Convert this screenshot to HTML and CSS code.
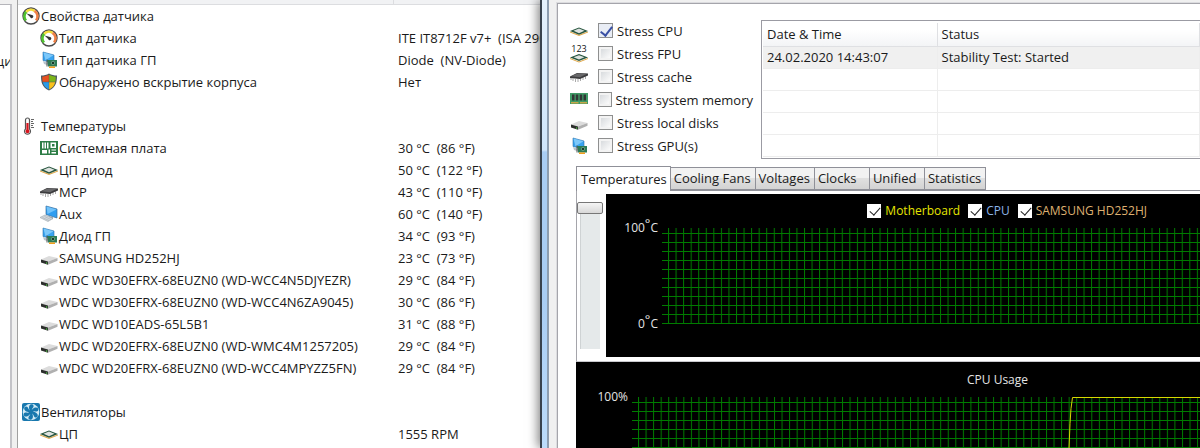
FILE: index.html
```
<!DOCTYPE html>
<html lang="ru">
<head>
    <meta charset="UTF-8">
    <meta name="viewport" content="width=device-width, initial-scale=1.0">
    <title>Датчики</title>
    <link rel="stylesheet" href="styles.css">
</head>
<body>
    <!-- icon set -->
    <svg class="sprite" width="0" height="0" aria-hidden="true">
        <defs>
            <symbol id="i-gauge" viewBox="0 0 18 18">
                <circle cx="9" cy="9" r="8" fill="#fff" stroke="#4a4a4a" stroke-width="1.4"/>
                <path d="M4 13.500A6.300 6.300 0 0 1 4.300 4.800" fill="none" stroke="#4fc22e" stroke-width="2.600"/>
                <path d="M4.300 4.800A6.300 6.300 0 0 1 12.500 3.800" fill="none" stroke="#f3dc3c" stroke-width="2.600"/>
                <path d="M12.500 3.800A6.300 6.300 0 0 1 14 13.300" fill="none" stroke="#f08046" stroke-width="2.600"/>
                <path d="M4.500 6.500l5.500 1.500a1.600 1.600 0 1 1-1.800 2z" fill="#333"/>
            </symbol>
            <symbol id="i-gpu" viewBox="0 0 18 18">
                <path d="M3 1l11 3v8L3 9.500z" fill="#38a3f0" stroke="#2b6ea8" stroke-width=".6"/>
                <path d="M3.500 1.500l10 2.800-8 5z" fill="#7cc8fa"/>
                <path d="M3 10l5 2-1 2-3-1z" fill="#b9c4cc"/>
                <path d="M7 9h10v6.500H8z" fill="#2c7a55"/>
                <path d="M7 8.500v7" stroke="#555" stroke-width="1"/>
                <circle cx="13" cy="12" r="1.700" fill="#163b2a" stroke="#8fc4a8" stroke-width=".6"/>
                <path d="M9 16.200h6" stroke="#f0a020" stroke-width="1.600"/>
            </symbol>
            <symbol id="i-shield" viewBox="0 0 18 18">
                <path d="M9 .5C6.500 2 4 2.600 1 2.600c0 7 1 11.500 8 15 7-3.500 8-8 8-15-3 0-5.500-.6-8-2.100z" fill="#4c5860"/>
                <path d="M8.800 1.800C6.800 3 4.500 3.600 2.200 3.700c0 2 .1 3.600.5 5.100h6.100z" fill="#e8501e"/>
                <path d="M9.200 1.800c2 1.200 4.300 1.800 6.600 1.900 0 2-.1 3.600-.5 5.100H9.200z" fill="#7cb518"/>
                <path d="M2.800 9.200c.8 3.300 2.600 5.400 6 7.200V9.200z" fill="#2a9be8"/>
                <path d="M15.200 9.200c-.8 3.300-2.600 5.400-6 7.200V9.200z" fill="#fbc21b"/>
            </symbol>
            <symbol id="i-temp" viewBox="0 0 18 18">
                <path d="M3.500 12V3a2 2 0 0 1 4 0v9a3 3 0 1 1-4 0z" fill="#fff" stroke="#555" stroke-width="1.200"/>
                <path d="M4.400 12.500V6h2.200v6.500a2 2 0 1 1-2.200 0z" fill="#d8141c"/>
                <path d="M9 2.500h3M9 4.500h2M9 6.500h3M9 8.500h2M9 10.500h3" stroke="#666" stroke-width="1"/>
            </symbol>
            <symbol id="i-board" viewBox="0 0 18 18">
                <path d="M0 2h18v14H0z" fill="#2d7d46"/>
                <path d="M2 3.500h1.500v6H2zM4.500 3.500H6v6H4.500zM7 3.500h1.500v6H7zM10.500 3.500H16V9h-5.500zM2 11h5v3.500H2zM8.500 10.500H10v4H8.500zM11.500 10.500H16v1h-4.500zM11.500 13H16v1.500h-4.500z" fill="#fff"/>
                <path d="M12 5h2.500v2.500H12z" fill="#2d7d46"/>
            </symbol>
            <symbol id="i-cpu" viewBox="0 0 18 18">
                <path d="M0 9.500l9 3.300 9-3.300v1l-9 3.400-9-3.400z" fill="#e0a84a"/>
                <path d="M0 9l9-3.600L18 9l-9 3.800z" fill="#27553e"/>
                <path d="M3.500 8.800L9 6.600l5.500 2.200L9 11.200z" fill="#dde2df"/>
            </symbol>
            <symbol id="i-fpu" viewBox="0 0 18 18">
                <text x="9" y="7" class="digits">123</text>
                <path d="M0 13l9 3.500 9-3.500v1l-9 3.500L0 14z" fill="#e0a84a"/>
                <path d="M0 12.500L9 9l9 3.500L9 16z" fill="#27553e"/>
                <path d="M3.500 12.300L9 10.200l5.500 2.100L9 14.400z" fill="#dde2df"/>
            </symbol>
            <symbol id="i-chip" viewBox="0 0 18 18">
                <path d="M1 9.500v2.500M3 10.500v2.500M5.500 11v3M8 11v3M10.500 10v3M13 9v3M15.500 8v3" stroke="#aaa" stroke-width="1"/>
                <path d="M0 8.500L7 5l11 .5v2L10 11 0 10z" fill="#3c3c3e"/>
                <path d="M1 8.300L7.500 5.500l9.500.3-7 3.500z" fill="#68686a"/>
            </symbol>
            <symbol id="i-pc" viewBox="0 0 18 18">
                <path d="M6 1l11 3v9L6 9.500z" fill="#2f9df0" stroke="#3a6f9c" stroke-width=".7"/>
                <path d="M6.500 1.600l10 2.800-9 4.600z" fill="#72c3fa"/>
                <path d="M9 11l4 1.200v2L9 13z" fill="#96a2ac"/>
                <path d="M0 12.500l5-2.500 8 3.500-5 3z" fill="#d5dade" stroke="#98a2aa" stroke-width=".6"/>
                <path d="M2.500 12.500l6.500 3M4.500 11.500l6.500 3" stroke="#98a2aa" stroke-width=".5"/>
            </symbol>
            <symbol id="i-disk" viewBox="0 0 18 18">
                <path d="M1 10.500L9 7l8.500 2L8 12.500z" fill="#dcdcdc"/>
                <path d="M8 12.500L17.500 9v2.800L8 15.800z" fill="#b0b0b0"/>
                <path d="M1 10.500l7 2v3.300l-7-2.300z" fill="#2c2e2c"/>
                <path d="M6 13.900l1.200.4" stroke="#52d048" stroke-width="1.200"/>
            </symbol>
            <symbol id="i-fan" viewBox="0 0 18 18">
                <rect width="18" height="18" rx="2" fill="#1878ae"/>
                <circle cx="9" cy="9" r="8.300" fill="#d3ebf6"/>
                <g fill="#1878ae">
                    <path id="blade" d="M9 9C6.500 7 6.300 2 9 1.200c3-.4 3.300 2.600 1.300 4.200z"/>
                    <use href="#blade" transform="rotate(60 9 9)"/>
                    <use href="#blade" transform="rotate(120 9 9)"/>
                    <use href="#blade" transform="rotate(180 9 9)"/>
                    <use href="#blade" transform="rotate(240 9 9)"/>
                    <use href="#blade" transform="rotate(300 9 9)"/>
                </g>
                <circle cx="9" cy="9" r="2.200" fill="#1878ae"/>
            </symbol>
            <symbol id="i-ram" viewBox="0 0 18 18">
                <path d="M0 2h18v11H0z" fill="#3f9a66"/>
                <path d="M2 3.500h2.500v6H2zM5.800 3.500h2.500v6H5.800zM9.700 3.500h2.500v6H9.700zM13.500 3.500H16v6h-2.500z" fill="#303634"/>
                <path d="M1 11.700h7.500M10 11.700h7" stroke="#c8a648" stroke-width="1.600"/>
            </symbol>
            <symbol id="i-case" viewBox="0 0 18 18">
                <path d="M4 4q5-4 10 0v12H4z" fill="#8c9298"/>
            </symbol>
            <pattern id="rows" width="9" height="9" patternUnits="userSpaceOnUse">
                <path d="M0 5.500h9" stroke="#007c00"/>
            </pattern>
            <pattern id="cols" x="6" width="7.555" height="9" patternUnits="userSpaceOnUse">
                <path d="M.5 0v9" stroke="#007c00"/>
            </pattern>
        </defs>
    </svg>

    <main class="desktop">
        <section class="report">
            <aside class="tree"><span>ци</span></aside>
            <div class="list">
                <div class="list-head"><span></span><span></span></div>
                <table class="sensors">
                    <colgroup><col class="col-name"><col></colgroup>
                    <tbody>
                        <tr><th><svg class="icon"><use href="#i-gauge"/></svg>Свойства датчика</th><td></td></tr>
                        <tr class="sub"><th><svg class="icon"><use href="#i-gauge"/></svg>Тип датчика</th><td>ITE IT8712F v7+&nbsp; (ISA 290h)</td></tr>
                        <tr class="sub"><th><svg class="icon"><use href="#i-gpu"/></svg>Тип датчика ГП</th><td>Diode&nbsp; (NV-Diode)</td></tr>
                        <tr class="sub"><th><svg class="icon"><use href="#i-shield"/></svg>Обнаружено вскрытие корпуса</th><td>Нет</td></tr>
                        <tr><th></th><td></td></tr>
                        <tr><th><svg class="icon"><use href="#i-temp"/></svg>Температуры</th><td></td></tr>
                        <tr class="sub"><th><svg class="icon"><use href="#i-board"/></svg>Системная плата</th><td>30 °C&nbsp; (86 °F)</td></tr>
                        <tr class="sub"><th><svg class="icon"><use href="#i-cpu"/></svg>ЦП диод</th><td>50 °C&nbsp; (122 °F)</td></tr>
                        <tr class="sub"><th><svg class="icon"><use href="#i-chip"/></svg>MCP</th><td>43 °C&nbsp; (110 °F)</td></tr>
                        <tr class="sub"><th><svg class="icon"><use href="#i-pc"/></svg>Aux</th><td>60 °C&nbsp; (140 °F)</td></tr>
                        <tr class="sub"><th><svg class="icon"><use href="#i-gpu"/></svg>Диод ГП</th><td>34 °C&nbsp; (93 °F)</td></tr>
                        <tr class="sub"><th><svg class="icon"><use href="#i-disk"/></svg>SAMSUNG HD252HJ</th><td>23 °C&nbsp; (73 °F)</td></tr>
                        <tr class="sub"><th><svg class="icon"><use href="#i-disk"/></svg>WDC WD30EFRX-68EUZN0 (WD-WCC4N5DJYEZR)</th><td>29 °C&nbsp; (84 °F)</td></tr>
                        <tr class="sub"><th><svg class="icon"><use href="#i-disk"/></svg>WDC WD30EFRX-68EUZN0 (WD-WCC4N6ZA9045)</th><td>30 °C&nbsp; (86 °F)</td></tr>
                        <tr class="sub"><th><svg class="icon"><use href="#i-disk"/></svg>WDC WD10EADS-65L5B1</th><td>31 °C&nbsp; (88 °F)</td></tr>
                        <tr class="sub"><th><svg class="icon"><use href="#i-disk"/></svg>WDC WD20EFRX-68EUZN0 (WD-WMC4M1257205)</th><td>29 °C&nbsp; (84 °F)</td></tr>
                        <tr class="sub"><th><svg class="icon"><use href="#i-disk"/></svg>WDC WD20EFRX-68EUZN0 (WD-WCC4MPYZZ5FN)</th><td>29 °C&nbsp; (84 °F)</td></tr>
                        <tr><th></th><td></td></tr>
                        <tr><th><svg class="icon"><use href="#i-fan"/></svg>Вентиляторы</th><td></td></tr>
                        <tr class="sub"><th><svg class="icon"><use href="#i-cpu"/></svg>ЦП</th><td>1555 RPM</td></tr>
                        <tr class="sub"><th><svg class="icon"><use href="#i-case"/></svg></th><td></td></tr>
                    </tbody>
                </table>
            </div>
        </section>

        <section class="window">
            <div class="client" lang="en">
                <div class="top">
                    <div class="stress">
                        <label><svg class="icon"><use href="#i-cpu"/></svg><input type="checkbox" checked>Stress CPU</label>
                        <label><svg class="icon"><use href="#i-fpu"/></svg><input type="checkbox">Stress FPU</label>
                        <label><svg class="icon"><use href="#i-chip"/></svg><input type="checkbox">Stress cache</label>
                        <label><svg class="icon"><use href="#i-ram"/></svg><input type="checkbox">Stress system memory</label>
                        <label><svg class="icon"><use href="#i-disk"/></svg><input type="checkbox">Stress local disks</label>
                        <label><svg class="icon"><use href="#i-gpu"/></svg><input type="checkbox">Stress GPU(s)</label>
                    </div>
                    <div class="log">
                        <table>
                            <colgroup><col class="col-date"><col></colgroup>
                            <thead>
                                <tr><th>Date &amp; Time</th><th>Status</th></tr>
                            </thead>
                            <tbody>
                                <tr class="current"><td>24.02.2020 14:43:07</td><td>Stability Test: Started</td></tr>
                                <tr><td></td><td></td></tr>
                                <tr><td></td><td></td></tr>
                                <tr><td></td><td></td></tr>
                                <tr><td></td><td></td></tr>
                            </tbody>
                        </table>
                    </div>
                </div>

                <div class="graphs">
                    <div class="tabs" role="tablist">
                        <button type="button" role="tab" class="active" aria-selected="true">Temperatures</button>
                        <button type="button" role="tab">Cooling Fans</button>
                        <button type="button" role="tab">Voltages</button>
                        <button type="button" role="tab">Clocks</button>
                        <button type="button" role="tab">Unified</button>
                        <button type="button" role="tab">Statistics</button>
                    </div>
                    <div class="panel">
                        <input class="scale" type="range" min="0" max="100" value="0" aria-label="Scale">
                        <div class="chart temps">
                            <div class="legend">
                                <label class="mb"><input type="checkbox" checked>Motherboard</label>
                                <label class="cpu"><input type="checkbox" checked>CPU</label>
                                <label class="hdd"><input type="checkbox" checked>SAMSUNG HD252HJ</label>
                            </div>
                            <div class="plot">
                                <div class="axis"><span>100<sup>°</sup>C</span><span>0<sup>°</sup>C</span></div>
                                <svg class="grid">
                                    <rect width="100%" height="100%" fill="url(#rows)"/>
                                    <rect x="6" width="100%" height="100%" fill="url(#cols)"/>
                                </svg>
                            </div>
                        </div>
                    </div>
                    <div class="chart usage">
                        <div class="caption">CPU Usage</div>
                        <div class="plot">
                            <div class="axis"><span>100%</span></div>
                            <svg class="grid">
                                <rect width="100%" height="100%" fill="url(#rows)"/>
                                <rect x="5" width="100%" height="100%" fill="url(#cols)"/>
                                <path d="M434 52.500l3-1 1-25 1-15 1.500-11H4000" fill="none" stroke="#d8d800"/>
                            </svg>
                        </div>
                    </div>
                </div>
            </div>
        </section>
    </main>
</body>
</html>
```

FILE: styles.css
```
* {
    box-sizing: border-box;
}

body {
    margin: 0;
    background-color: #f0f0f0;
    color: #1a1a1a;
    font-family: "Open Sans", "Noto Sans", sans-serif;
    font-size: 13px;
    line-height: 22px;
}

button, input {
    font: inherit;
    margin: 0;
}

.sprite {
    display: block;
}

.digits {
    font-size: 9px;
    text-anchor: middle;
    fill: #111;
}

.icon {
    flex: none;
    width: 18px;
    height: 18px;
}

.desktop {
    display: flex;
    height: 100vh;
    overflow: hidden;
}

/* sensor report */
.report {
    display: flex;
    flex: 0 0 45%;
    min-width: 0;
}

.tree {
    flex: none;
    width: 12px;
    margin: 4px 5px 0 0;
    padding-top: 45px;
    overflow: hidden;
    background-color: #fff;
    border-top: 1px solid #b5b5ba;
    border-right: 2px solid #c3c3c8;
}

.tree span {
    display: block;
    margin-left: -4px;
}

.list {
    flex: 1;
    min-width: 0;
    overflow: hidden;
    background-color: #fff;
    border-left: 1px solid #a0a0a0;
}

.list-head {
    display: flex;
    height: 5px;
    background-color: #f1f2f4;
    border-bottom: 1px solid #dcdde0;
}

.list-head span:first-child {
    width: 376px;
    border-right: 1px solid #dcdde0;
}

.sensors {
    table-layout: fixed;
    width: 100%;
    border-collapse: collapse;
}

.col-name {
    width: 380px;
}

.sensors th,
.sensors td {
    height: 22px;
    padding: 0;
    font-weight: normal;
    text-align: left;
    white-space: nowrap;
}

.sensors th {
    padding-left: 4px;
}

.sensors .sub th {
    padding-left: 22px;
}

.sensors .icon {
    margin-right: 1px;
    vertical-align: -4px;
}

/* stability test window */
.window {
    flex: 1;
    min-width: 0;
    display: flex;
    z-index: 1;
    padding: 3px 0 0 8px;
    background: linear-gradient(90deg, transparent 5px, #8d9db0 5px, #8d9db0 7px, transparent 7px), linear-gradient(#e4f1fd, #cfe5fb 150px, #a9cdf4 152px, #a9cdf4 300px, #bcdcfb) 0 0 / 6px 100% no-repeat #f0f0f0;
    border-left: 2px solid #38424e;
    box-shadow: -2px 0 10px rgba(0, 0, 0, 0.5);
}

.client {
    flex: 1;
    min-width: 0;
    margin-left: 7px;
    background-color: #fff;
    border: solid #a5a5ab;
    border-width: 1px 0 0 1px;
    outline: 1px solid #dcdcdf;
}

.top {
    display: flex;
    align-items: flex-start;
    gap: 8px;
    padding: 15px 0 0 12px;
}

.stress {
    display: flex;
    flex-direction: column;
    flex: none;
    width: 183px;
}

.stress label {
    display: flex;
    align-items: center;
    height: 23px;
    white-space: nowrap;
}

.stress input {
    appearance: none;
    width: 15px;
    height: 15px;
    margin: 0 4px 0 10px;
    background: linear-gradient(135deg, #d8dbde, #fbfbfb) center / 9px 9px no-repeat #f3f3f3;
    border: 1px solid #8e8f8f;
}

.stress input:checked {
    background: #e9edf5;
}

.stress input:checked::after {
    content: "";
    display: block;
    width: 5px;
    height: 10px;
    margin: 0 0 0 4px;
    border: solid #3a50a4;
    border-width: 0 2px 2px 0;
    transform: rotate(38deg);
}

.log {
    flex: 1;
    min-width: 0;
    height: 139px;
    margin-top: 1px;
    padding: 2px 0 0 1px;
    overflow: hidden;
    border: solid #9b9ba3;
    border-width: 1px 0 1px 1px;
}

.log table {
    table-layout: fixed;
    width: 100%;
    border-collapse: collapse;
}

.col-date {
    width: 174px;
}

.log th,
.log td {
    height: 22px;
    padding: 0 4px;
    font-weight: normal;
    line-height: 21px;
    text-align: left;
    border-bottom: 1px solid #ededed;
    border-right: 1px solid #ededed;
}

.log th {
    height: 23px;
    background: linear-gradient(#fff 30%, #f3f4f6);
    border-color: #dfe0e3;
}

.log .current td {
    background-color: #f0f0f0;
}

/* tabs and graphs */
.graphs {
    margin: 7px 0 0 18px;
}

.tabs {
    display: flex;
    align-items: flex-end;
    height: 25px;
    border-bottom: 1px solid #8f9098;
}

.tabs button {
    min-width: 55px;
    height: 23px;
    padding: 0 4px 0 3px;
    color: #1a1a1a;
    line-height: 21px;
    text-align: left;
    white-space: nowrap;
    background: linear-gradient(#f2f2f2 45%, #e0e0e0 50%, #d3d3d3);
    border: 1px solid #8f9098;
    border-left-width: 0;
}

.tabs .active {
    height: 25px;
    margin-bottom: -1px;
    padding: 0 3px 0 4px;
    background: #fff;
    border-left-width: 1px;
    border-bottom-width: 0;
}

.panel {
    display: flex;
    padding: 3px 0 4px;
    border-left: 1px solid #a5a5ab;
    border-bottom: 1px solid #c8c8cc;
}

.scale {
    appearance: none;
    flex: none;
    writing-mode: vertical-lr;
    width: 26px;
    height: 147px;
    margin: 8px 3px 0 0;
    background: linear-gradient(90deg, transparent 3px, #b8bcbe 3px, #e5e9ea 4px, #e5e9ea 23px, transparent 23px);
}

.scale::-webkit-slider-thumb {
    appearance: none;
    width: 26px;
    height: 12px;
    background: linear-gradient(#f5f5f5, #d8d8d8);
    border: 1px solid #777;
    border-radius: 2px;
}

.chart {
    flex: 1;
    min-width: 0;
    background-color: #000;
    color: #e4e4e4;
    font-size: 12px;
    line-height: 16px;
}

.temps {
    height: 163px;
    padding-top: 9px;
}

.legend {
    display: flex;
    gap: 8px;
    padding-left: 44%;
    white-space: nowrap;
}

.legend label {
    display: flex;
    align-items: center;
    gap: 4px;
    height: 16px;
}

.legend input {
    appearance: none;
    width: 14px;
    height: 14px;
    background-color: #fff;
}

.legend input:checked::after {
    content: "";
    display: block;
    width: 5px;
    height: 9px;
    margin: 1px 0 0 5px;
    border: solid #222;
    border-width: 0 1px 1px 0;
    transform: rotate(42deg);
}

.mb {
    color: #e6e600;
}

.cpu {
    color: #8cb4e8;
}

.hdd {
    color: #dfb070;
}

.plot {
    display: flex;
    align-items: center;
    margin-top: 1px;
}

.axis {
    display: flex;
    flex: none;
    flex-direction: column;
    justify-content: space-between;
    width: 56px;
    height: 112px;
    padding-right: 4px;
    text-align: right;
}

.axis sup {
    font-size: 13px;
    line-height: 0;
    vertical-align: 4px;
}

.grid {
    display: block;
    flex: 1;
    min-width: 0;
    height: 96px;
}

.usage {
    padding-top: 10px;
}

.caption {
    padding-left: 391px;
}
```
